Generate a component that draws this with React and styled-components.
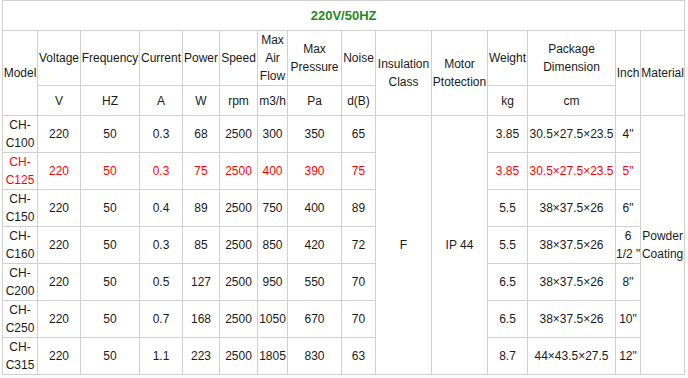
import React from "react";
import styled, { createGlobalStyle } from "styled-components";

const Global = createGlobalStyle`
  html, body { margin: 0; padding: 0; background: #fff; }
  body { font-family: Arial, "Liberation Sans", sans-serif; }
`;

const Page = styled.div`
  padding: 0 0 0 2px;
`;

const Table = styled.table`
  border-collapse: collapse;
  table-layout: fixed;
  width: 683px;
  font-family: Arial, "Liberation Sans", sans-serif;
  font-size: 12px;
  line-height: 18px;
  color: #1a1a1a;
`;

const Row = styled.tr`
  height: ${(p) => p.$h}px;
  color: ${(p) => (p.$red ? "#ff0000" : "#1a1a1a")};
`;

const Cell = styled.td`
  border: 1px solid #d0d0d0;
  padding: 0;
  text-align: center;
  vertical-align: middle;
  white-space: nowrap;
  overflow: visible;
`;

const TitleCell = styled(Cell)`
  color: #1f8a1f;
  font-weight: bold;
  font-size: 13px;
`;

const widths = [35, 43, 59, 43, 37, 38, 30, 54, 34, 56, 56, 40, 88, 25, 44];

const data = [
  ["CH-\nC100", "220", "50", "0.3", "68", "2500", "300", "350", "65", "3.85", "30.5×27.5×23.5", '4"'],
  ["CH-\nC125", "220", "50", "0.3", "75", "2500", "400", "390", "75", "3.85", "30.5×27.5×23.5", '5"'],
  ["CH-\nC150", "220", "50", "0.4", "89", "2500", "750", "400", "89", "5.5", "38×37.5×26", '6"'],
  ["CH-\nC160", "220", "50", "0.3", "85", "2500", "850", "420", "72", "5.5", "38×37.5×26", '6\n1/2 "'],
  ["CH-\nC200", "220", "50", "0.5", "127", "2500", "950", "550", "70", "6.5", "38×37.5×26", '8"'],
  ["CH-\nC250", "220", "50", "0.7", "168", "2500", "1050", "670", "70", "6.5", "38×37.5×26", '10"'],
  ["CH-\nC315", "220", "50", "1.1", "223", "2500", "1805", "830", "63", "8.7", "44×43.5×27.5", '12"'],
];

const Lines = ({ text }) =>
  text.split("\n").map((t, i, a) => (
    <React.Fragment key={i}>
      {t}
      {i < a.length - 1 && <br />}
    </React.Fragment>
  ));

export default function App() {
  return (
    <Page>
      <Global />
      <Table>
        <colgroup>
          {widths.map((w, i) => (
            <col key={i} style={{ width: w }} />
          ))}
        </colgroup>
        <tbody>
          <Row $h={30}>
            <TitleCell colSpan={15}>220V/50HZ</TitleCell>
          </Row>
          <Row $h={54}>
            <Cell rowSpan={2}>Model</Cell>
            <Cell>Voltage</Cell>
            <Cell>Frequency</Cell>
            <Cell>Current</Cell>
            <Cell>Power</Cell>
            <Cell>Speed</Cell>
            <Cell><Lines text={"Max\nAir\nFlow"} /></Cell>
            <Cell><Lines text={"Max\nPressure"} /></Cell>
            <Cell>Noise</Cell>
            <Cell rowSpan={2}><Lines text={"Insulation\nClass"} /></Cell>
            <Cell rowSpan={2}><Lines text={"Motor\nPtotection"} /></Cell>
            <Cell>Weight</Cell>
            <Cell><Lines text={"Package\nDimension"} /></Cell>
            <Cell rowSpan={2}>Inch</Cell>
            <Cell rowSpan={2}>Material</Cell>
          </Row>
          <Row $h={30}>
            <Cell>V</Cell>
            <Cell>HZ</Cell>
            <Cell>A</Cell>
            <Cell>W</Cell>
            <Cell>rpm</Cell>
            <Cell>m3/h</Cell>
            <Cell>Pa</Cell>
            <Cell>d(B)</Cell>
            <Cell>kg</Cell>
            <Cell>cm</Cell>
          </Row>
          {data.map((r, i) => (
            <Row key={i} $h={37} $red={i === 1}>
              {r.slice(0, 9).map((v, j) => (
                <Cell key={j}><Lines text={v} /></Cell>
              ))}
              {i === 0 && (
                <>
                  <Cell rowSpan={7}>F</Cell>
                  <Cell rowSpan={7}>IP 44</Cell>
                </>
              )}
              {r.slice(9).map((v, j) => (
                <Cell key={"b" + j}><Lines text={v} /></Cell>
              ))}
              {i === 0 && <Cell rowSpan={7}><Lines text={"Powder\nCoating"} /></Cell>}
            </Row>
          ))}
        </tbody>
      </Table>
    </Page>
  );
}
